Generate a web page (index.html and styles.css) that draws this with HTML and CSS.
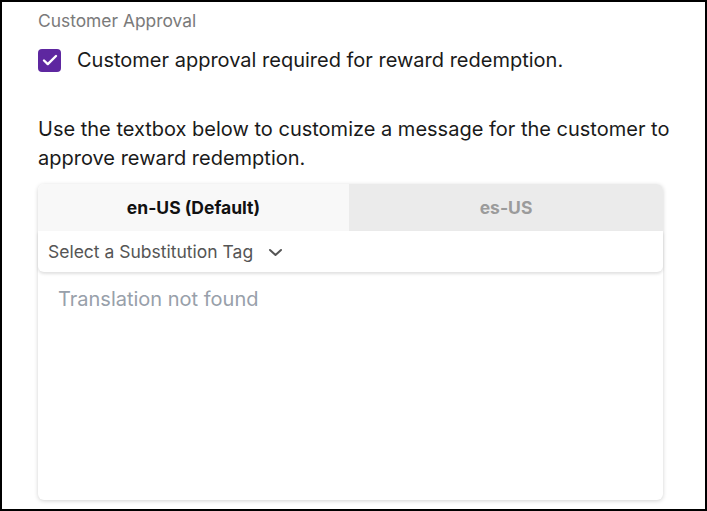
FILE: index.html
```html
<!DOCTYPE html>
<html lang="en">
<head>
<meta charset="utf-8">
<title>Customer Approval</title>
<link rel="stylesheet" href="styles.css">
</head>
<body>
<div class="frame">
  <div class="section-title">Customer Approval</div>
  <label class="check-row">
    <span class="checkbox">
      <svg width="18" height="18" viewBox="0 0 18 18"><path d="M3 9.5l3.8 3.6L15 5" fill="none" stroke="#fff" stroke-width="2.4" stroke-linecap="round" stroke-linejoin="round"/></svg>
    </span>
    <span class="check-label">Customer approval required for reward redemption.</span>
  </label>
  <p class="help">Use the textbox below to customize a message for the customer to approve reward redemption.</p>
  <div class="card">
    <div class="tabs">
      <div class="tab active">en-US (Default)</div>
      <div class="tab">es-US</div>
    </div>
    <div class="toolbar">
      <span class="tag-select">Select a Substitution Tag</span>
      <svg class="chev" width="15" height="9" viewBox="0 0 15 9"><path d="M2 2l5.5 5 5.5-5" fill="none" stroke="#555" stroke-width="2" stroke-linecap="round" stroke-linejoin="round"/></svg>
    </div>
    <div class="editor">Translation not found</div>
  </div>
</div>
</body>
</html>
```
FILE: styles.css
```css
html, body {
  margin: 0;
  padding: 0;
  background: #fff;
}
body {
  font-family: Inter, "Noto Sans", sans-serif;
  color: #1a1a1a;
}
.frame {
  box-sizing: border-box;
  width: 707px;
  height: 511px;
  border: 2px solid #000;
  padding: 9px 0 0 36px;
  overflow: hidden;
}
.section-title {
  font-size: 17.4px;
  line-height: 20px;
  color: #7a7a7a;
}
.check-row {
  display: flex;
  align-items: center;
  margin-top: 17px;
  gap: 16px;
}
.checkbox {
  width: 23px;
  height: 23px;
  border-radius: 4px;
  background: #5e27a0;
  display: flex;
  align-items: center;
  justify-content: center;
}
.check-label {
  font-size: 20px;
  line-height: 24px;
  color: #1a1a1a;
}
.help {
  margin: 43px 0 0 0;
  font-size: 20px;
  line-height: 28.5px;
  width: 640px;
  color: #1a1a1a;
}
.card {
  margin-top: 12px;
  width: 625px;
  height: 316px;
  border-radius: 6px;
  background: #fff;
  box-shadow: 0 1px 4px rgba(0,0,0,0.18);
  display: flex;
  flex-direction: column;
}
.tabs {
  display: flex;
  height: 47px;
}
.tab {
  flex: 1;
  display: flex;
  align-items: center;
  justify-content: center;
  font-size: 17.5px;
  font-weight: 700;
  background: #ebebeb;
  color: #9b9b9b;
}
.tab:first-child { border-top-left-radius: 6px; }
.tab:last-child { border-top-right-radius: 6px; }
.tab.active {
  background: #f8f8f8;
  color: #111;
  flex: 0 0 311px;
}
.toolbar {
  height: 41px;
  display: flex;
  align-items: center;
  padding-left: 10px;
  gap: 15px;
  background: #fff;
  border-radius: 0 0 6px 6px;
  box-shadow: 0 2px 3px rgba(0,0,0,0.12);
  position: relative;
}
.tag-select {
  font-size: 17.5px;
  color: #555;
}
.chev { margin-top: 1px; }
.editor {
  padding: 15px 20px;
  font-size: 20px;
  color: #98a0aa;
}
```
